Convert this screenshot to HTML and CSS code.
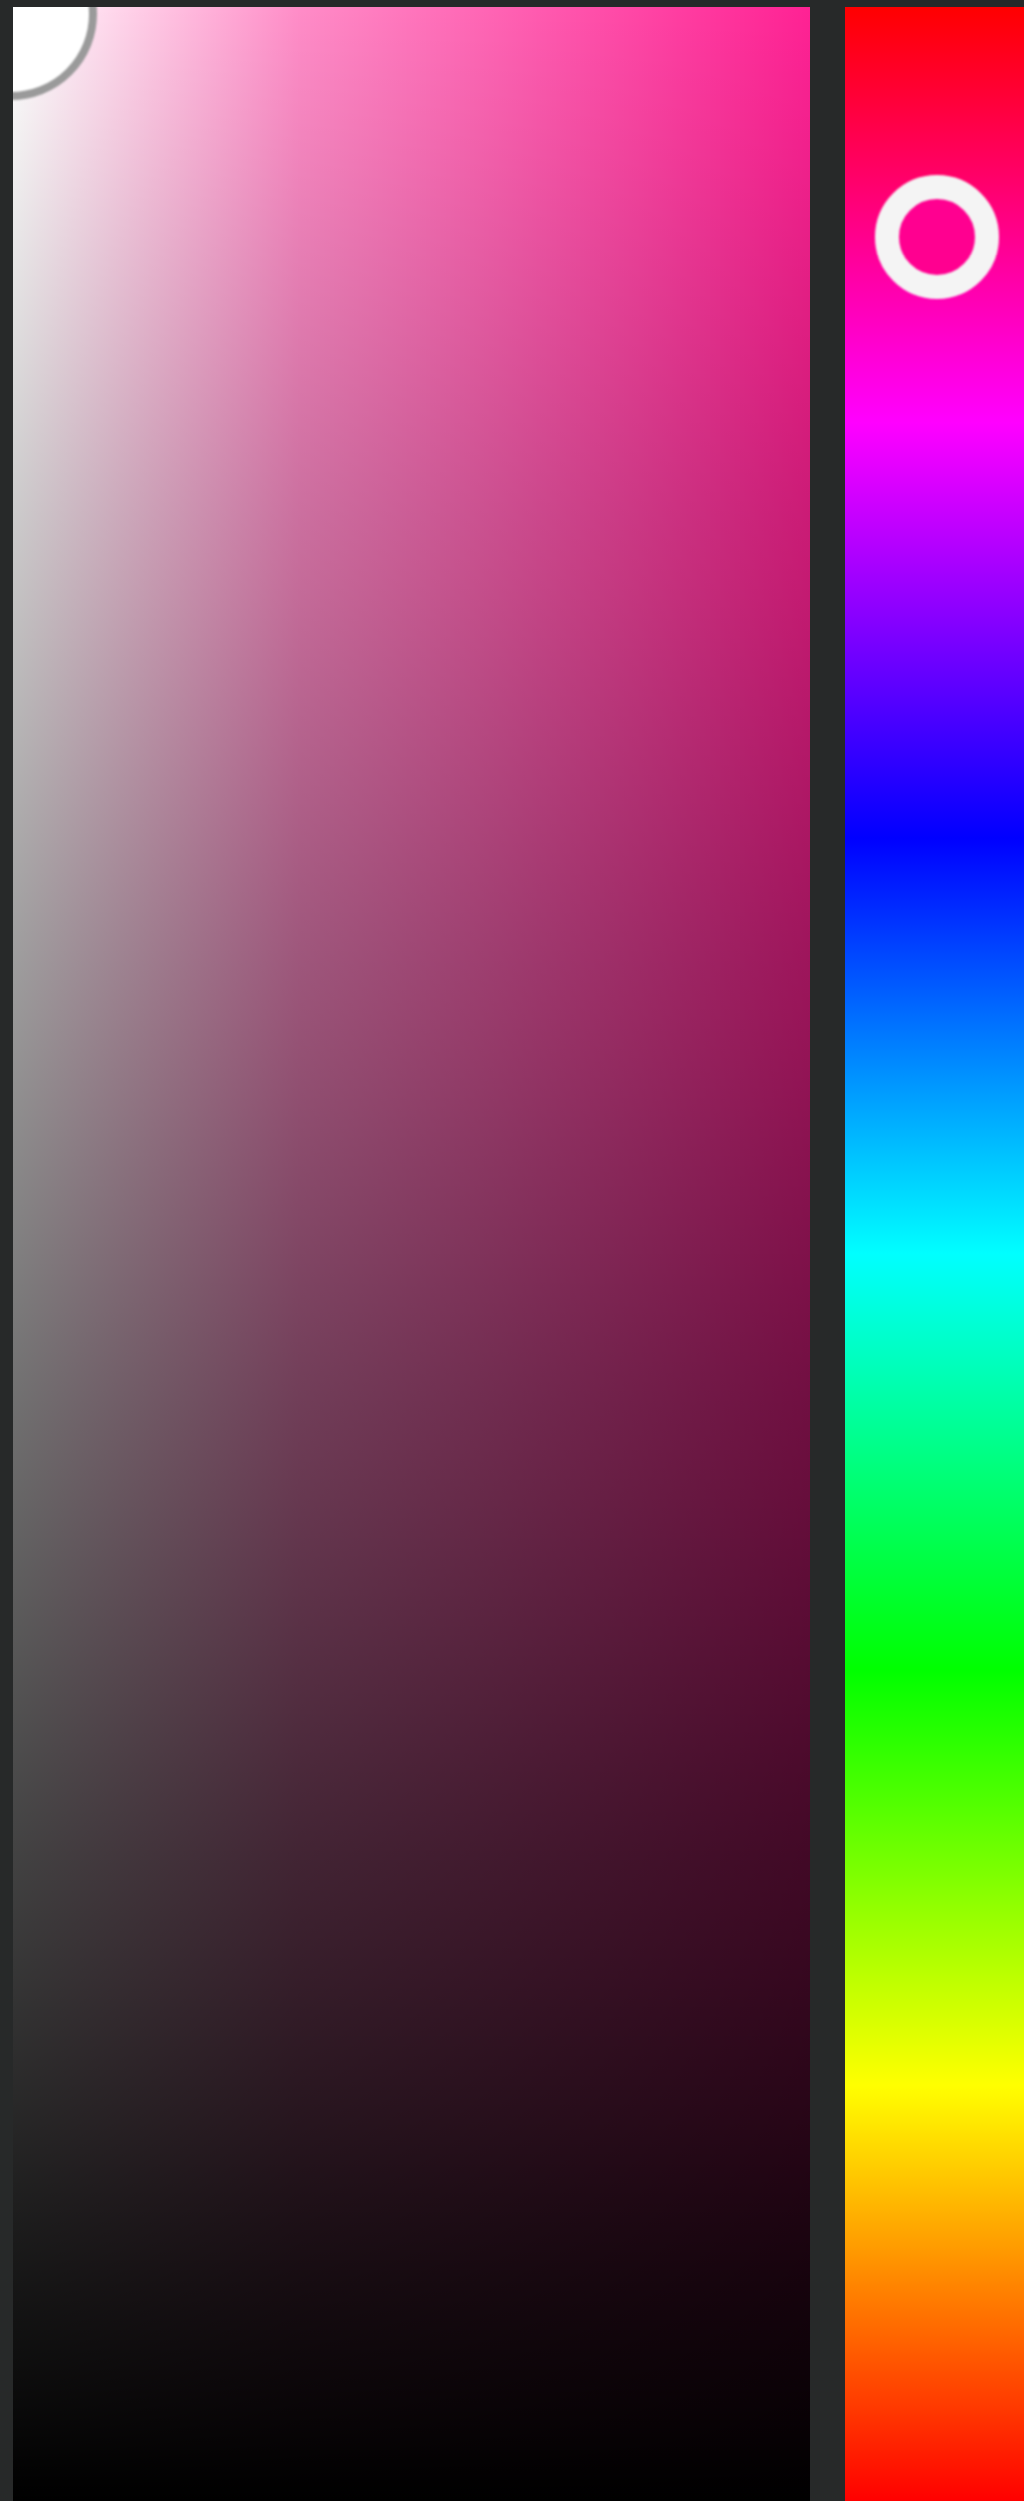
FILE: index.html
```html
<!DOCTYPE html>
<html lang="en">
<head>
  <meta charset="UTF-8">
  <title>Color picker</title>
  <meta name="viewport" content="width=device-width, initial-scale=1.0">
  <link rel="stylesheet" href="styles.css">
</head>
<body>
  <div class="picker">
    <!-- saturation / value field -->
    <div class="sv-field">
      <div class="sv-thumb"></div>
    </div>

    <!-- hue slider, 360 at the top down to 0 -->
    <div class="hue-strip">
      <div class="hue-thumb"></div>
    </div>
  </div>
</body>
</html>
```

FILE: styles.css
```css
html, body {
  margin: 0;
  height: 100%;
}

body {
  background: #272929;
  overflow: hidden;
}

.picker {
  display: flex;
  gap: 35px;
  height: 2494px;
  padding: 7px 0 0 13px;
}

.sv-field {
  position: relative;
  flex: 0 0 797px;
  overflow: hidden;
  background-color: #ff2294;
  background-image:
    linear-gradient(to top, #000, rgba(0, 0, 0, 0)),
    linear-gradient(to right, #fff, rgba(255, 255, 255, 0.48) 36%, rgba(255, 255, 255, 0));
}

.sv-thumb {
  position: absolute;
  left: -2px;
  top: 7px;
  width: 156px;
  height: 156px;
  margin: -86px 0 0 -86px;
  border: 8px solid #9a9a9a;
  border-radius: 50%;
  background: #fff;
  filter: blur(0.8px);
}

.hue-strip {
  position: relative;
  flex: 1;
  background: linear-gradient(to bottom,
    #ff0000 0%,
    #ff00ff 16.67%,
    #0000ff 33.33%,
    #00ffff 50%,
    #00ff00 66.67%,
    #ffff00 83.33%,
    #ff0000 100%);
}

.hue-thumb {
  position: absolute;
  left: 92px;
  top: 230px;
  width: 76px;
  height: 76px;
  margin: -62px 0 0 -62px;
  border: 24px solid #f4f4f4;
  border-radius: 50%;
  background: #ff0090;
  filter: blur(1px);
}
```
